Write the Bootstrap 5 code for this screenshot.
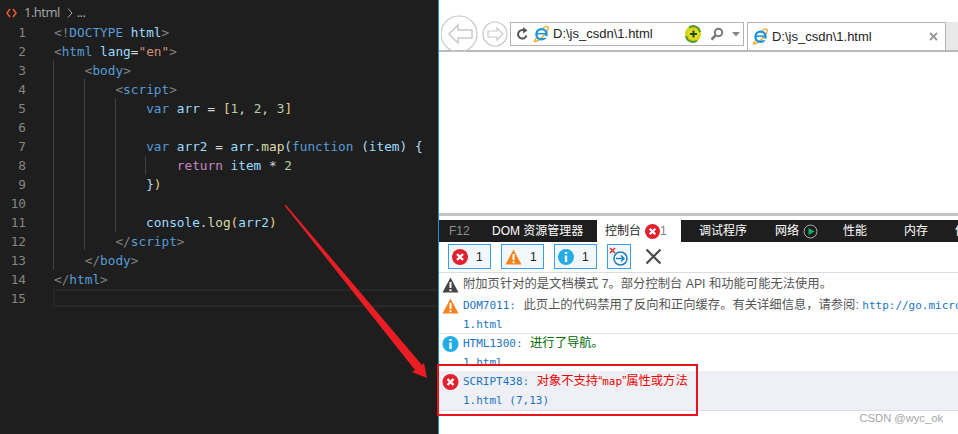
<!doctype html>
<html lang="zh"><head><meta charset="utf-8"><title>1.html</title>
<link rel="stylesheet" href="https://cdn.jsdelivr.net/npm/bootstrap@5.3.0/dist/css/bootstrap.min.css">
<style>
html,body{width:958px;height:434px;overflow:hidden;margin:0;background:#fff}
.shot{width:958px;height:434px;position:relative;overflow:hidden}
.ed{width:438px;height:434px;flex:none;background:#1e1e1e;position:relative;overflow:hidden;font:12.75px/19px "DejaVu Sans Mono",monospace;color:#9cdcfe}
.crumb{height:23px;padding:3px 0 0 6px;font:13px/18px "Open Sans","Liberation Sans",sans-serif;color:#a9a9a9;letter-spacing:-.5px}
.crumb svg{margin-right:7px;vertical-align:-1px}
.cline{height:19px;display:flex;white-space:pre;position:relative}
.lnum{width:26px;flex:none;text-align:right;margin-right:28px;color:#858585}
.curr{position:absolute;left:53px;right:0;top:289px;height:18px;border:2px solid #282828;border-right:0}
.guide{position:absolute;width:1px;background:#404040}
.g1{left:53px;top:60px;height:210px}.g2{left:84px;top:79px;height:171px}.g3{left:115px;top:98px;height:134px}.g4{left:145px;top:156px;height:19px}
.k{color:#569cd6}.p{color:#808080}.s{color:#ce9178}.n{color:#b5cea8}.f{color:#dcdcaa}.r{color:#c586c0}.w{color:#d4d4d4}.y{color:#e6cf8c}.v{color:#b4d8ee}.d{color:#d4d4d4}
.pane{flex:1;border-left:1px solid #1b8fd6;height:434px;background:#fff;overflow:hidden;font-family:"Liberation Sans","Noto Sans CJK SC",sans-serif}
.ietop{height:52px;padding:14px 0 0 2px;border-bottom:2px solid #b9b9b9;display:flex;align-items:flex-start}
.navs{width:69px;flex:none;height:36px}
.addr{width:234px;height:24px;margin-top:8px;border:1px solid #b4b4b4;display:flex;align-items:center;padding-left:5px;font-size:13px;color:#222;flex:none}
.addr .u{margin:0 0 0 3px;width:131px}
.ietab{width:199px;height:28px;margin:8px 0 0 3px;border:1px solid #b4b4b4;border-bottom:0;display:flex;align-items:center;padding-left:4px;font-size:13px;color:#222;flex:none}
.ietab .u{margin-left:3px;width:157px}
.rest{flex:1;height:28px;margin-top:8px;background:#e9e9e9}
.blank{height:164px;border-bottom:3px solid #c4c4c4}
.tabs{height:22px;margin-top:4px;background:#1e1e1e;color:#fff;display:flex;font-size:12px;line-height:22px;white-space:nowrap;overflow:hidden}
.tb{flex:none;display:flex;align-items:center}
.t0{padding-left:10px;width:53px;color:#8f8f8f}.t1{width:105px}.t2{width:84px;background:#fff;color:#1e1e1e;padding-left:8px}.t3{padding-left:18px;width:94px}.t4{width:68px}.t5{width:61px}.t6{width:51px}
.tools{height:31px;border-bottom:1px solid #dcdcdc;padding:2px 0 0 9px;display:flex;gap:10px;align-items:flex-start;font-size:12px;color:#222}
.fbtn{height:25px;width:43px;border:1px solid #3a9df0;background:#f2f7fc;display:flex;align-items:center;padding-left:3px;gap:8px;flex:none}
.fbtn.nar{width:24px;padding-left:1px}
.closex{margin:4px 0 0 4px}
.msg{font:12.3px/19px "Liberation Sans","Noto Sans CJK SC",sans-serif;color:#555;padding-left:3px;position:relative;white-space:nowrap;overflow:hidden}
.msg svg{flex:none}
.mr{display:flex;height:19px;align-items:center;gap:4px}
.mono{font:11px/19px "DejaVu Sans Mono","Noto Sans CJK SC",monospace;color:#1a73c4}
.lab{margin-right:4px}
.pl{padding-left:21px}
.b1{height:22px;padding-top:2px}
.b2{height:39px;border-bottom:1px solid #e6e6e6;padding-top:1px}
.b3{height:32px}
.b4{height:40px;margin-top:5px;background:#eef0f5;border-bottom:1px solid #dcdde2;padding-top:1px}
.grn{color:#060}.red{color:#e00}
.rbox{position:absolute;left:437px;top:364px;width:261px;height:52px;border:2px solid #e8141c;pointer-events:none}
.arrow{position:absolute;left:0;top:0;pointer-events:none}
.wm{position:absolute;right:15px;top:410px;font:11.2px/16px "Liberation Sans",sans-serif;color:#a6a6a6}
</style></head><body>
<svg width="0" height="0" class="position-absolute"><defs>
<symbol id="ie" viewBox="0 0 20 20"><path d="M4.200 14.500C1 18 .9 19.200 3 18.800c2-.4 6-3 10.200-7.600C17 7 19 2.500 17.500 1.500c-1.200-.8-3.500 0-6 1.500" fill="none" stroke="#f0a31e" stroke-width="1.500"/><circle cx="10" cy="10.300" r="6" fill="none" stroke="#1a93dc" stroke-width="2.700"/><path d="M4 10.500h12v-1.800h-12z" fill="#1a93dc"/><path d="M13 13.500l4 0" stroke="#fff" stroke-width="2"/></symbol>
<symbol id="xr" viewBox="0 0 16 16"><circle cx="8" cy="8" r="8" fill="#e2202e"/><path d="M5 5l6 6M11 5l-6 6" stroke="#fff" stroke-width="2.400"/></symbol>
<symbol id="wa" viewBox="0 0 17 16"><path d="M8.500 .5L16.500 15.500H.5z" fill="#f4821f"/><path d="M8.500 5v6M8.500 12.200v2" stroke="#fff" stroke-width="2"/></symbol>
<symbol id="wg" viewBox="0 0 17 16"><path d="M8.500 .5L16.500 15.500H.5z" fill="#444"/><path d="M8.500 5v6M8.500 12.200v2" stroke="#fff" stroke-width="2"/></symbol>
<symbol id="in" viewBox="0 0 16 16"><circle cx="8" cy="8" r="8" fill="#23ade6"/><path d="M8 6.500v6.500M8 3v2" stroke="#fff" stroke-width="2.400"/></symbol>
</defs></svg>
<div class="shot d-flex">
<div class="ed">
<div class="crumb"><svg width="11" height="10" viewBox="0 0 11 10"><path d="M4 1L1 5l3 4M7 1l3 4-3 4" fill="none" stroke="#e4572e" stroke-width="1.600"/></svg><span>1.html</span> <svg class="ms-1 me-1" width="6" height="10" viewBox="0 0 6 10"><path d="M1 .5L5 5 1 9.500" fill="none" stroke="#a9a9a9"/></svg><span>...</span></div>
<div class="cline"><span class="lnum">1</span><span><span class="p">&lt;!</span><span class="k">DOCTYPE</span> <span>html</span><span class="p">&gt;</span></span></div>
<div class="cline"><span class="lnum">2</span><span><span class="p">&lt;</span><span class="k">html</span> <span>lang</span><span class="w">=</span><span class="s">"en"</span><span class="p">&gt;</span></span></div>
<div class="cline"><span class="lnum">3</span><span>    <span class="p">&lt;</span><span class="k">body</span><span class="p">&gt;</span></span></div>
<div class="cline"><span class="lnum">4</span><span>        <span class="p">&lt;</span><span class="k">script</span><span class="p">&gt;</span></span></div>
<div class="cline"><span class="lnum">5</span><span>            <span class="k">var</span> arr <span class="w">=</span> <span class="y">[</span><span class="n">1</span><span class="w">,</span> <span class="n">2</span><span class="w">,</span> <span class="n">3</span><span class="y">]</span></span></div>
<div class="cline"><span class="lnum">6</span></div>
<div class="cline"><span class="lnum">7</span><span>            <span class="k">var</span> arr2 <span class="w">=</span> arr<span class="w">.</span><span class="f">map</span><span class="v">(</span><span class="k">function</span> <span class="v">(</span>item<span class="v">)</span> <span class="v">{</span></span></div>
<div class="cline"><span class="lnum">8</span><span>                <span class="r">return</span> item <span class="w">*</span> <span class="n">2</span></span></div>
<div class="cline"><span class="lnum">9</span><span>            <span class="v">}</span><span class="y">)</span></span></div>
<div class="cline"><span class="lnum">10</span></div>
<div class="cline"><span class="lnum">11</span><span>            console<span class="w">.</span><span class="f">log</span><span class="y">(</span>arr2<span class="y">)</span></span></div>
<div class="cline"><span class="lnum">12</span><span>        <span class="p">&lt;/</span><span class="k">script</span><span class="p">&gt;</span></span></div>
<div class="cline"><span class="lnum">13</span><span>    <span class="p">&lt;/</span><span class="k">body</span><span class="p">&gt;</span></span></div>
<div class="cline"><span class="lnum">14</span><span><span class="p">&lt;/</span><span class="k">html</span><span class="p">&gt;</span></span></div>
<div class="cline"><span class="lnum">15</span></div>
<div class="curr"></div>
<div class="guide g1"></div><div class="guide g2"></div><div class="guide g3"></div><div class="guide g4"></div>
</div>
<div class="pane">
<div class="ietop">
<div class="navs"><svg width="69" height="38" viewBox="0 0 69 38"><g fill="none" stroke="#c9c9c9" stroke-width="1.200"><circle cx="18" cy="20" r="18"/><path d="M8 20l9-9v5h14v8H17v5z" stroke-width="1.500"/><circle cx="54" cy="20" r="12"/><path d="M62 20l-6-6v3h-9v6h9v3z"/></g></svg></div>
<div class="addr"><svg width="13" height="14" viewBox="0 0 13 14"><path d="M10.500 8.500A4.300 4.300 0 1 1 8 3.300" fill="none" stroke="#555" stroke-width="2"/><path d="M7 0l4.500 3.500L7 6.500z" fill="#555"/></svg><svg class="ms-1" width="17" height="18"><use href="#ie"/></svg><span class="u">D:\js_csdn\1.html</span>
<svg width="18" height="18" viewBox="0 0 18 18"><circle cx="9" cy="9" r="8" fill="#d9d21c"/><path d="M2 11a7 7 0 0 0 11 4.500M16 7A7 7 0 0 0 5 2.500" fill="none" stroke="#4f9d23" stroke-width="2"/><circle cx="9.500" cy="9" r="5" fill="#e9dd2c"/><path d="M9.500 5.500v7M6 9h7" stroke="#1c4d10" stroke-width="2"/></svg>
<svg class="ms-2" width="14" height="14" viewBox="0 0 14 14"><circle cx="8.500" cy="5.500" r="3.700" fill="none" stroke="#777" stroke-width="2"/><path d="M6 8l-4.500 4.500" stroke="#777" stroke-width="2.500"/></svg>
<svg class="ms-2" width="8" height="5" viewBox="0 0 8 5"><path d="M0 0h8L4 4.500z" fill="#888"/></svg></div>
<div class="ietab"><svg width="17" height="17"><use href="#ie"/></svg><span class="u">D:\js_csdn\1.html</span><svg width="9" height="9" viewBox="0 0 9 9"><path d="M1 1l7 7M8 1L1 8" stroke="#9a9a9a" stroke-width="2"/></svg></div>
<div class="rest"></div>
</div>
<div class="blank"></div>
<div class="tabs">
<div class="tb t0">F12</div><div class="tb t1">DOM 资源管理器</div>
<div class="tb t2">控制台<svg class="ms-1" width="15" height="15"><use href="#xr"/></svg><span class="p">1</span></div>
<div class="tb t3">调试程序</div>
<div class="tb t4">网络<svg class="ms-1" width="15" height="15" viewBox="0 0 15 15"><circle cx="7.500" cy="7.500" r="6.500" fill="none" stroke="#aaa"/><path d="M5.500 4l6 3.500-6 3.500z" fill="#0fb56f"/></svg></div>
<div class="tb t5">性能</div><div class="tb t6">内存</div><div class="tb">仿真</div>
</div>
<div class="tools">
<div class="fbtn"><svg width="16" height="16"><use href="#xr"/></svg><span>1</span></div>
<div class="fbtn"><svg width="17" height="16"><use href="#wa"/></svg><span>1</span></div>
<div class="fbtn"><svg width="16" height="16"><use href="#in"/></svg><span>1</span></div>
<div class="fbtn nar"><svg width="20" height="20" viewBox="0 0 20 20"><path d="M1 1l5 5M6 1L1 6" stroke="#d8333a" stroke-width="1.500"/><circle cx="11.500" cy="11.500" r="6.500" fill="#fff" stroke="#1a7fc4" stroke-width="1.500"/><path d="M7 11.500h8M12 8.500l3 3-3 3" fill="none" stroke="#1a7fc4" stroke-width="1.500"/></svg></div>
<svg class="closex" width="17" height="17" viewBox="0 0 17 17"><path d="M1.500 1.500l14 14M15.500 1.500l-14 14" stroke="#4a4a4a" stroke-width="2.200"/></svg>
</div>
<div class="msg b1"><div class="mr"><svg width="17" height="16"><use href="#wg"/></svg><span>附加页针对的是文档模式 7。部分控制台 API 和功能可能无法使用。</span></div></div>
<div class="msg b2"><div class="mr"><svg width="17" height="16"><use href="#wa"/></svg><span><span class="mono lab">DOM7011:</span> 此页上的代码禁用了反向和正向缓存。有关详细信息，请参阅: <span class="mono">http://go.microsoft.com</span></span></div><div class="mono pl">1.html</div></div>
<div class="msg b3"><div class="mr"><svg width="17" height="16"><use href="#in"/></svg><span><span class="mono lab">HTML1300:</span> <span class="grn">进行了导航。</span></span></div><div class="mono pl">1.html</div></div>
<div class="msg b4"><div class="mr"><svg width="17" height="16"><use href="#xr"/></svg><span><span class="mono lab">SCRIPT438:</span> <span class="red">对象不支持“<span class="mono red">map</span>”属性或方法</span></span></div><div class="mono pl">1.html (7,13)</div></div>
</div>
<svg class="arrow" width="958" height="434" viewBox="0 0 958 434"><path d="M284.500 205.500L286 205L422 365L424 363L427 378L412 372L415 370Z" fill="#ea1c24"/></svg>
<div class="rbox"></div>
<div class="wm">CSDN @wyc_ok</div>
</div>
</body></html>
